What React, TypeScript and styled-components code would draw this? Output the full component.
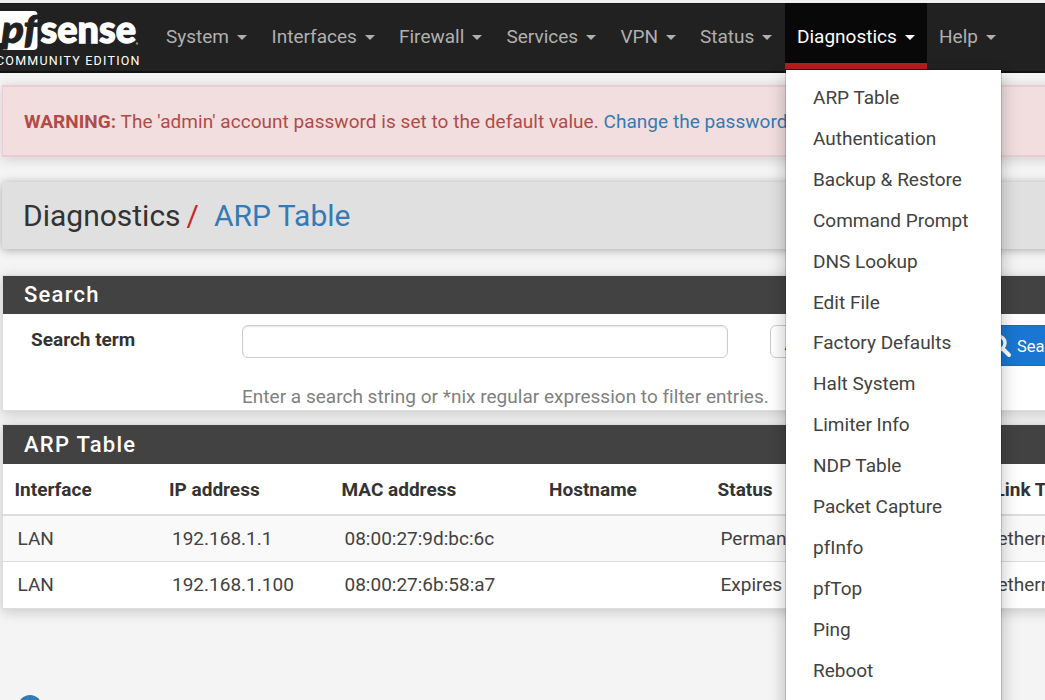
import React from "react";
import styled, { createGlobalStyle } from "styled-components";

const Global = createGlobalStyle`
  * { box-sizing: border-box; }
  html, body { margin: 0; overflow: hidden; }
  body { background: #f4f4f4; font-family: Roboto, "Liberation Sans", sans-serif; font-size: 19px; color: #424242; }
  a { color: #337ab7; text-decoration: none; }
`;

const Page = styled.div`
  width: 1045px;
  height: 700px;
  overflow: hidden;
  background: #f4f4f4;
  white-space: nowrap;
`;

const Navbar = styled.nav`
  display: flex;
  align-items: flex-start;
  height: 73px;
  border-top: 3px solid #f0f0f0;
  border-bottom: 2px solid #111;
  background: #212121;
  box-shadow: inset 0 1px 0 #1a1a1a;
`;

const Brand = styled.a`
  display: block;
  flex: none;
  width: 153.5px;
  height: 66px;
`;

const NavItem = styled.div<{ $active?: boolean; $width: number }>`
  position: relative;
  flex: none;
  display: flex;
  align-items: center;
  width: ${(p) => p.$width}px;
  height: 66px;
  padding: 7px 0 0 12.5px;
  border-bottom: ${(p) => (p.$active ? "6px solid #b71c1c" : "6px solid transparent")};
  background: ${(p) => (p.$active ? "#080808" : "transparent")};
  background-clip: padding-box;
  color: ${(p) => (p.$active ? "#fff" : "#b0b0b0")};
  line-height: 26px;
`;

const Caret = styled.span`
  margin-left: 8px;
  margin-top: 2px;
  border-top: 5px solid currentColor;
  border-left: 5px solid transparent;
  border-right: 5px solid transparent;
`;

const Menu = styled.ul`
  position: absolute;
  z-index: 5;
  top: 66px;
  left: 0;
  width: 217px;
  margin: 0;
  padding: 8px 0 30px;
  list-style: none;
  background: #fff;
  border: 1px solid rgba(0, 0, 0, 0.15);
  background-clip: padding-box;
  box-shadow: 0 8px 16px rgba(0, 0, 0, 0.25);
  color: #424242;
`;

const MenuItem = styled.li`
  height: 40.92px;
  padding-left: 27.5px;
  line-height: 40.92px;
`;

const Content = styled.main`
  display: flex;
  flex-direction: column;
  width: 1120px;
  padding: 12px 0 0 2px;
`;

const Alert = styled.div`
  height: 72px;
  padding-left: 21px;
  border: 1px solid #ebccd1;
  border-width: 2px 1px;
  background: #f2dede;
  color: #b14a48;
  letter-spacing: 0.038px;
  line-height: 69px;
  box-shadow: 0 2px 12px rgba(0, 0, 0, 0.16);
`;

const Heading = styled.header`
  height: 67px;
  margin-top: 25px;
  padding-left: 21px;
  border-radius: 4px;
  background: #e0e0e0;
  color: #333;
  font-size: 30px;
  line-height: 68px;
  box-shadow: 0 1px 10px rgba(0, 0, 0, 0.32);
`;

const Slash = styled.span`
  margin: 0 15px 0 6px;
  color: #c62828;
`;

const Panel = styled.section<{ $top: number; $height: number }>`
  height: ${(p) => p.$height}px;
  margin-top: ${(p) => p.$top}px;
  border: 1px solid #ddd;
  background: #fff;
  box-shadow: 0 3px 12px rgba(0, 0, 0, 0.18);
`;

const PanelTitle = styled.h2<{ $height: number }>`
  height: ${(p) => p.$height}px;
  margin: 0;
  padding-left: 21px;
  background: #424242;
  color: #fff;
  font-size: 22px;
  font-weight: 500;
  letter-spacing: 1.25px;
  line-height: ${(p) => p.$height}px;
`;

const SearchForm = styled.form`
  display: grid;
  grid-template-columns: 239px 486px 41.5px 190.5px 13px 140px;
  padding-top: 11px;
`;

const Label = styled.label`
  padding-left: 28px;
  color: #333;
  font-weight: 700;
  line-height: 30px;
`;

const Input = styled.input`
  width: 100%;
  height: 33px;
  border: 1px solid #ccc;
  border-radius: 6px;
  box-shadow: inset 0 1px 2px rgba(0, 0, 0, 0.1);
`;

const Select = styled.div`
  grid-column: 4;
  height: 33px;
  padding-left: 14px;
  border: 1px solid #ccc;
  border-radius: 6px;
  line-height: 35px;
`;

const SearchButton = styled.button`
  grid-column: 6;
  display: flex;
  align-items: center;
  gap: 5px;
  height: 41px;
  padding: 1px 0 0 15px;
  border: 1px solid #1a69bd;
  background: #1976d2;
  color: #fff;
  font: 16.5px Roboto, sans-serif;
`;

const Help = styled.span`
  grid-column: 2 / 5;
  padding-top: 18px;
  color: #808080;
  letter-spacing: 0.015px;
  line-height: 26px;
`;

const Row = styled.div<{ $head?: boolean; $odd?: boolean }>`
  display: grid;
  grid-template-columns: 154.5px 172.5px 207.5px 168.5px 277px 140px;
  height: ${(p) => (p.$head ? 52 : 46)}px;
  padding-left: ${(p) => (p.$head ? 11.5 : 14.5)}px;
  border-bottom: ${(p) => (p.$head ? 2 : 1)}px solid #ddd;
  background: ${(p) => (p.$odd ? "#f9f9f9" : "#fff")};
  color: ${(p) => (p.$head ? "#333" : "#424242")};
  font-weight: ${(p) => (p.$head ? 700 : 400)};
  line-height: ${(p) => (p.$head ? 52 : 45)}px;
  &:last-child { border-bottom: 0; }
`;

const Footer = styled.footer`
  margin-top: 86px;
  padding-left: 16px;
`;

const menu = ["ARP Table", "Authentication", "Backup & Restore", "Command Prompt", "DNS Lookup", "Edit File", "Factory Defaults", "Halt System", "Limiter Info", "NDP Table", "Packet Capture", "pfInfo", "pfTop", "Ping", "Reboot"];

const nav: [string, number][] = [
  ["System", 105.5], ["Interfaces", 127.5], ["Firewall", 107.5], ["Services", 114], ["VPN", 79.5], ["Status", 97], ["Diagnostics", 142], ["Help", 90],
];

const rows = [
  ["LAN", "192.168.1.1", "08:00:27:9d:bc:6c", "", "Perman", "ethernet"],
  ["LAN", "192.168.1.100", "08:00:27:6b:58:a7", "", "Expires", "ethernet"],
];

function Logo() {
  return (
    <svg width="153" height="66" viewBox="0 3 153 66">
      <path d="M-3 11H34Q37.5 11 37.5 15V46Q37.5 50 33 50H-3Z" fill="#fff" />
      <path d="M-3 43H4L2.5 51H-3Z" fill="#212121" />
      <text x="1.5" y="42.7" fontFamily="Lato" fontWeight="900" fontStyle="italic" fontSize="37" fill="#212121" stroke="#212121" strokeWidth="0.9" textLength="36" lengthAdjust="spacingAndGlyphs">pf</text>
      <text x="40.5" y="42.7" fontFamily="Lato" fontWeight="900" fontSize="37" fill="#fff" stroke="#fff" strokeWidth="1.3" textLength="95.5" lengthAdjust="spacingAndGlyphs">sense</text>
      <circle cx="137" cy="43.5" r="1.2" fill="#888" />
      <text x="-4" y="65" fontFamily="Roboto" fontSize="12.5" fill="#fff" textLength="143.5">COMMUNITY EDITION</text>
    </svg>
  );
}

export default function App() {
  return (
    <Page>
      <Global />
      <Navbar>
        <Brand><Logo /></Brand>
        {nav.map(([name, width]) => (
          <NavItem key={name} $width={width} $active={name === "Diagnostics"}>
            {name}
            <Caret />
            {name === "Diagnostics" && <Menu>{menu.map((m) => <MenuItem key={m}>{m}</MenuItem>)}</Menu>}
          </NavItem>
        ))}
      </Navbar>
      <Content>
        <Alert><b>WARNING:</b> The 'admin' account password is set to the default value. <a href="#">Change the password</a></Alert>
        <Heading>Diagnostics<Slash>/</Slash><a href="#">ARP Table</a></Heading>
        <Panel $top={26} $height={136}>
          <PanelTitle $height={38}>Search</PanelTitle>
          <SearchForm>
            <Label>Search term</Label>
            <Input />
            <Select>All</Select>
            <SearchButton type="button">
              <svg width="23" height="24" viewBox="0 0 23 24" fill="none" stroke="#fff" strokeWidth="3.4">
                <circle cx="9" cy="9" r="7" />
                <path d="M14 15L20 21" strokeLinecap="round" strokeWidth="4" />
              </svg>
              <span>Search</span>
            </SearchButton>
            <Help>Enter a search string or *nix regular expression to filter entries.</Help>
          </SearchForm>
        </Panel>
        <Panel $top={13} $height={185}>
          <PanelTitle $height={39}>ARP Table</PanelTitle>
          <Row $head>{["Interface", "IP address", "MAC address", "Hostname", "Status", "Link Type"].map((h) => <span key={h}>{h}</span>)}</Row>
          {rows.map((r, i) => <Row key={r[1]} $odd={i === 0}>{r.map((c, j) => <span key={j}>{c}</span>)}</Row>)}
        </Panel>
        <Footer>
          <svg width="24" height="24" viewBox="0 0 24 24"><circle cx="12" cy="12" r="12" fill="#337ab7" /></svg>
        </Footer>
      </Content>
    </Page>
  );
}
